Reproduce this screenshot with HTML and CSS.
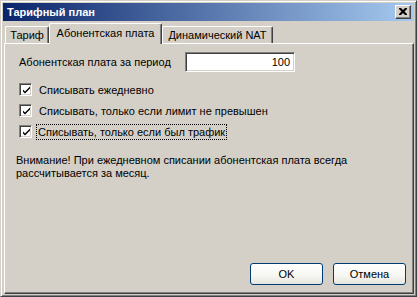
FILE: index.html
```html
<!DOCTYPE html>
<html>
<head>
<meta charset="utf-8">
<link rel="stylesheet" href="styles.css">
</head>
<body>
<div class="window">
  <div class="titlebar">
    <span class="title">Тарифный план</span>
    <span class="close"><svg width="8" height="7" viewBox="0 0 8 7"><path d="M0 0h2l2 2 2-2h2v1L5.5 3.5 8 6v1H6L4 5 2 7H0V6l2.5-2.5L0 1z" fill="#000"/></svg></span>
  </div>
  <div class="tabs">
    <div class="tab tab-tariff">Тариф</div>
    <div class="tab tab-fee active">Абонентская плата</div>
    <div class="tab tab-nat">Динамический NAT</div>
  </div>
  <div class="panel">
    <div class="row-fee">
      <span class="label">Абонентская плата за период</span>
      <span class="input">100</span>
    </div>
    <div class="checks">
      <div class="check-row"><span class="cb"><svg width="9" height="9" viewBox="0 0 9 9"><path d="M1 3.5v2l2 2 5-5v-2l-5 5z" fill="#000"/></svg></span><span class="cb-label">Списывать ежедневно</span></div>
      <div class="check-row"><span class="cb"><svg width="9" height="9" viewBox="0 0 9 9"><path d="M1 3.5v2l2 2 5-5v-2l-5 5z" fill="#000"/></svg></span><span class="cb-label">Списывать, только если лимит не превышен</span></div>
      <div class="check-row"><span class="cb"><svg width="9" height="9" viewBox="0 0 9 9"><path d="M1 3.5v2l2 2 5-5v-2l-5 5z" fill="#000"/></svg></span><span class="cb-label focus">Списывать, только если был трафик</span></div>
    </div>
    <p class="note">Внимание! При ежедневном списании абонентская плата всегда<br>рассчитывается за месяц.</p>
    <div class="buttons">
      <button class="btn">OK</button>
      <button class="btn">Отмена</button>
    </div>
  </div>
</div>
</body>
</html>
```
FILE: styles.css
```css
* { box-sizing: border-box; }
html, body { margin: 0; padding: 0; background: #d4d0c8; }
body { font-family: "Liberation Sans", Arial, sans-serif; font-size: 11px; color: #000; }

.window {
  width: 417px; height: 297px;
  background: #d4d0c8;
  border: 1px solid; border-color: #d4d0c8 #404040 #404040 #d4d0c8;
  box-shadow: inset 1px 1px #fff, inset -1px -1px #808080;
  padding: 2px;
  display: flex; flex-direction: column;
}

.titlebar {
  height: 18px;
  background: linear-gradient(to right, #0a246a, #a6caf0);
  display: flex; align-items: center; justify-content: space-between;
  padding: 0 3px 0 4px;
}
.title { color: #fff; font-weight: bold; font-size: 11px; }
.close {
  width: 16px; height: 14px;
  background: #d4d0c8;
  border: 1px solid; border-color: #fff #404040 #404040 #fff;
  box-shadow: inset -1px -1px #808080;
  display: flex; align-items: center; justify-content: center;
}
.close svg { display: block; margin: 0 1px 1px 0; }

.tabs {
  display: flex; align-items: flex-end;
  height: 20px; margin-top: 2px; padding-left: 2px;
  position: relative; z-index: 1;
}
.tab {
  height: 17px;
  border: 1px solid; border-bottom: none;
  border-color: #fff #404040 #404040 #fff;
  box-shadow: inset -1px 0 #808080;
  border-radius: 2px 2px 0 0;
  background: #d4d0c8;
  display: flex; align-items: center; justify-content: center;
  padding-bottom: 1px;
  white-space: nowrap;
}
.tab-tariff { width: 44px; }
.tab-fee { width: 113px; }
.tab-nat { width: 111px; }
.tab.active { height: 21px; margin-bottom: -1px; padding-bottom: 3px; }

.panel {
  flex: 1;
  margin-left: 1px;
  border: 1px solid; border-color: #fff #404040 #404040 #fff;
  box-shadow: inset -1px -1px #808080;
  display: flex; flex-direction: column;
  padding: 0 7px 8px 0;
}

.row-fee {
  display: flex; align-items: center;
  margin-top: 8px; padding-left: 14px;
}
.label { width: 166px; }
.input {
  width: 110px; height: 20px;
  background: #fff;
  border: 1px solid; border-color: #808080 #fff #fff #808080;
  box-shadow: inset 1px 1px #404040, inset -1px -1px #d4d0c8;
  text-align: right; padding: 3px 4px 0 0;
}

.checks { margin-top: 7px; padding-left: 14px; }
.check-row { height: 21px; display: flex; align-items: center; }
.cb {
  width: 13px; height: 13px; background: #fff;
  border: 1px solid; border-color: #808080 #fff #fff #808080;
  box-shadow: inset 1px 1px #404040, inset -1px -1px #d4d0c8;
  display: flex; align-items: center; justify-content: center;
  padding: 1px 0 0 1px;
}
.cb svg { display: block; }
.cb-label { margin-left: 5px; padding: 1px 1px; border: 1px solid transparent; }
.cb-label.focus { margin-left: 4px; border: 1px dotted #000; }

.note { margin: 12px 0 0 11px; line-height: 13px; white-space: nowrap; }

.buttons { margin-top: auto; display: flex; justify-content: flex-end; gap: 10px; }
.btn {
  width: 73px; height: 22px;
  font-family: "Liberation Sans", Arial, sans-serif; font-size: 11px; color: #000;
  border: 1px solid #003c74; border-radius: 3px;
  background: linear-gradient(#ffffff 0%, #f6f6f2 60%, #e6e4dc 100%);
  padding: 0;
}
```
